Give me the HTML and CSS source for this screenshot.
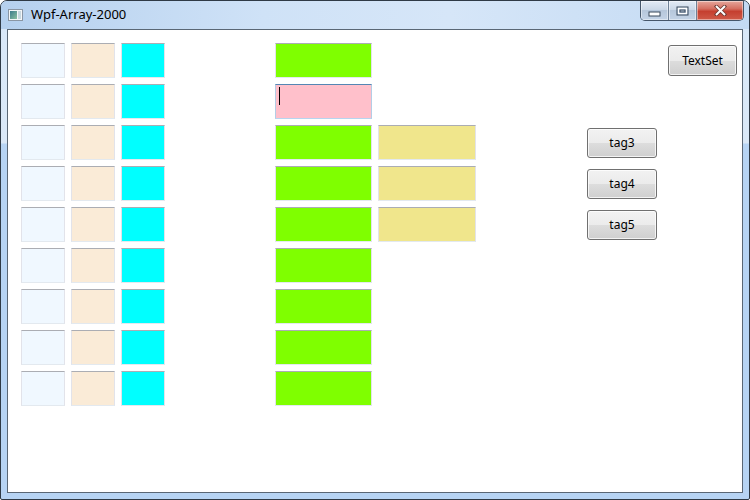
FILE: index.html
```html
<!DOCTYPE html>
<html>
<head>
<meta charset="utf-8">
<title>Wpf-Array-2000</title>
<link rel="stylesheet" href="styles.css">
</head>
<body>
<div class="window">
  <div class="titlebar">
    <svg class="app-icon" width="15" height="12" viewBox="0 0 15 12">
      <defs>
        <linearGradient id="ig" x1="0" y1="0" x2="1" y2="1">
          <stop offset="0" stop-color="#3c7c8c"/>
          <stop offset="1" stop-color="#8cc0a0"/>
        </linearGradient>
      </defs>
      <rect x="0.5" y="0.5" width="14" height="11" fill="#f4f6f8" stroke="#8a96a4"/>
      <rect x="2" y="2" width="7" height="8" fill="url(#ig)"/>
      <rect x="10" y="2" width="3" height="8" fill="#c8d8e0"/>
    </svg>
    <span class="title">Wpf-Array-2000</span>
    <div class="caption-buttons">
      <div class="cb cb-min">
        <svg width="13" height="6" viewBox="0 0 13 6"><rect x="1" y="1" width="11" height="4" fill="#fff" stroke="#3a4a5c" stroke-width="1"/></svg>
      </div>
      <div class="cb cb-max">
        <svg width="13" height="10" viewBox="0 0 13 10"><rect x="1" y="1" width="11" height="8" fill="none" stroke="#3a4a5c" stroke-width="1"/><rect x="2.5" y="2.5" width="8" height="5" fill="none" stroke="#fff" stroke-width="1.2"/><rect x="4" y="4" width="5" height="2" fill="none" stroke="#3a4a5c" stroke-width="1"/></svg>
      </div>
      <div class="cb cb-close">
        <svg width="13" height="11" viewBox="0 0 13 11"><path d="M2.5 1.5 L10.5 9.5 M10.5 1.5 L2.5 9.5" stroke="#6a3a34" stroke-width="3.6" stroke-linecap="square"/><path d="M2.7 1.7 L10.3 9.3 M10.3 1.7 L2.7 9.3" stroke="#fff" stroke-width="2" stroke-linecap="square"/></svg>
      </div>
    </div>
  </div>
  <div class="client">
    <div class="grid">
      <!-- row 1 -->
      <div class="tb c1 alice"></div><div class="tb c2 antique"></div><div class="tb c3 aqua"></div>
      <div class="tb c5 green"></div>
      <button class="btn c9 btn-textset">TextSet</button>
      <!-- row 2 -->
      <div class="tb c1 alice"></div><div class="tb c2 antique"></div><div class="tb c3 aqua"></div>
      <div class="tb c5 pink focused"><span class="caret"></span></div>
      <!-- row 3 -->
      <div class="tb c1 alice"></div><div class="tb c2 antique"></div><div class="tb c3 aqua"></div>
      <div class="tb c5 green"></div><div class="tb c6 khaki"></div>
      <button class="btn c8">tag3</button>
      <!-- row 4 -->
      <div class="tb c1 alice"></div><div class="tb c2 antique"></div><div class="tb c3 aqua"></div>
      <div class="tb c5 green"></div><div class="tb c6 khaki"></div>
      <button class="btn c8">tag4</button>
      <!-- row 5 -->
      <div class="tb c1 alice"></div><div class="tb c2 antique"></div><div class="tb c3 aqua"></div>
      <div class="tb c5 green"></div><div class="tb c6 khaki"></div>
      <button class="btn c8">tag5</button>
      <!-- row 6 -->
      <div class="tb c1 alice"></div><div class="tb c2 antique"></div><div class="tb c3 aqua"></div>
      <div class="tb c5 green"></div>
      <!-- row 7 -->
      <div class="tb c1 alice"></div><div class="tb c2 antique"></div><div class="tb c3 aqua"></div>
      <div class="tb c5 green"></div>
      <!-- row 8 -->
      <div class="tb c1 alice"></div><div class="tb c2 antique"></div><div class="tb c3 aqua"></div>
      <div class="tb c5 green"></div>
      <!-- row 9 -->
      <div class="tb c1 alice"></div><div class="tb c2 antique"></div><div class="tb c3 aqua"></div>
      <div class="tb c5 green"></div>
    </div>
  </div>
</div>
</body>
</html>
```
FILE: styles.css
```css
html, body {
  margin: 0;
  padding: 0;
  background: #ffffff;
}

.window {
  width: 750px;
  height: 500px;
  box-sizing: border-box;
  border: 1px solid #2f3a46;
  border-radius: 7px 7px 2px 2px;
  background: linear-gradient(to bottom, #c6dcf4 0px, #d9e8f8 30px, #dae8f7 142px, #b7d4f4 143px, #b7d4f4 100%);
  display: flex;
  flex-direction: column;
  overflow: hidden;
  font-family: "Noto Sans", "Open Sans", sans-serif;
}

.titlebar {
  height: 28px;
  flex: none;
  display: flex;
  align-items: flex-start;
  padding-left: 7px;
  background: linear-gradient(to right, #b5d0ee 0%, #cfe2f7 35%, #d6e6f8 60%, #c3daf3 100%);
}

.app-icon {
  margin-top: 8px;
  flex: none;
}

.title {
  margin-left: 8px;
  margin-top: 5px;
  font-size: 13px;
  line-height: 17px;
  color: #000000;
}

.caption-buttons {
  margin-left: auto;
  margin-right: 5px;
  display: flex;
  height: 19px;
  border: 1px solid #45566a;
  border-top: none;
  border-radius: 0 0 5px 5px;
  overflow: hidden;
}

.cb {
  height: 19px;
  display: flex;
  align-items: center;
  justify-content: center;
  box-shadow: inset 0 0 0 1px rgba(255,255,255,0.45);
}

.cb-min, .cb-max {
  width: 27px;
  background: linear-gradient(to bottom, #e3ebf5 0%, #cbd8e7 45%, #b6c7db 50%, #c3d3e6 100%);
  border-right: 1px solid #6f8196;
}

.cb-min svg { margin-top: 6px; }

.cb-close {
  width: 46px;
  background: linear-gradient(to bottom, #e6a79c 0%, #d57062 40%, #c53f2f 55%, #cf5a48 100%);
}

.client {
  flex: 1;
  margin: 0 6px 6px 6px;
  border: 1px solid #5a6775;
  background: #ffffff;
  padding: 13px;
}

.grid {
  display: grid;
  grid-template-columns: 44px 44px 44px 98px 97px 98px 99px 70px 74px;
  grid-auto-rows: 35px;
  column-gap: 6px;
  row-gap: 6px;
}

.c1 { grid-column: 1; }
.c2 { grid-column: 2; }
.c3 { grid-column: 3; }
.c5 { grid-column: 5; }
.c6 { grid-column: 6; }
.c8 { grid-column: 8; }
.c9 { grid-column: 9; }

.tb {
  box-sizing: border-box;
  border: 1px solid;
  border-color: #abadb3 #e2e3ea #e3e9ef #e2e3ea;
  position: relative;
}

.alice { background: #f0f8ff; }
.antique { background: #faebd7; }
.aqua { background: #00ffff; }
.green { background: #7fff00; }
.pink { background: #ffc0cb; }
.khaki { background: #f0e68c; }

.tb.focused {
  border-color: #5586b4 #b3cde6 #b7d5ef #b3cde6;
}

.caret {
  position: absolute;
  left: 3px;
  top: 2px;
  width: 1px;
  height: 18px;
  background: #000000;
}

.btn {
  align-self: center;
  box-sizing: border-box;
  height: 30px;
  width: 70px;
  margin: 0;
  padding: 0 0 1px 0;
  border: 1px solid #707070;
  border-radius: 3px;
  background: linear-gradient(to bottom, #f2f2f2 0%, #ebebeb 50%, #dddddd 50%, #cfcfcf 100%);
  box-shadow: inset 0 0 0 1px rgba(255,255,255,0.75);
  font-family: "Noto Sans", "Open Sans", sans-serif;
  font-size: 12px;
  color: #000000;
  display: flex;
  align-items: center;
  justify-content: center;
}

.btn-textset {
  width: 69px;
  height: 31px;
  justify-self: end;
}
```
